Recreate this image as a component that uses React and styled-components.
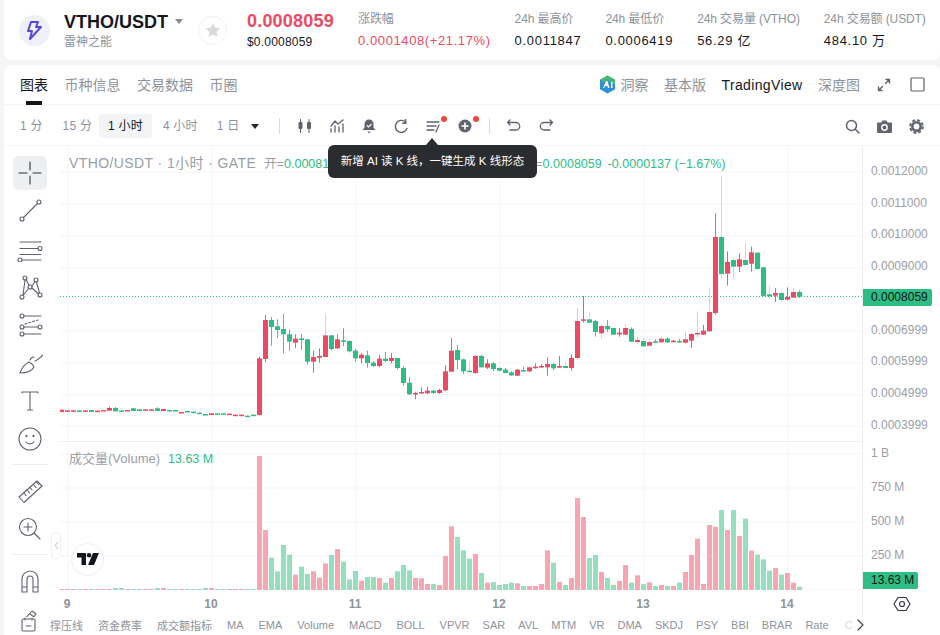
import React from "react"
import styled, { createGlobalStyle } from "styled-components"

const RED = "#ec4a62"
const GREEN = "#2dbd85"
const GREY = "#8d929b"
const INK = "#14171c"
const ICON = "#5f626e"

const GlobalStyle = createGlobalStyle`
  html, body {
    margin: 0;
    padding: 0;
    background: #f4f5f6;
  }
  body {
    font-family: "Liberation Sans", "Noto Sans CJK SC", sans-serif;
  }
`

// rows are [colour, body top, body bottom, wick top, wick bottom, pale wick], read off at 3x
const section = (base, rows) =>
  rows.map(([c, bt, bb, wt = bt, wb = bb, pale]) => ({
    red: c === "r",
    top: base + bt / 3,
    bottom: base + bb / 3,
    wickTop: base + wt / 3,
    wickBottom: base + wb / 3,
    pale,
  }))

const flat = [
  ["r", 809, 816, 809, 816, 0], ["r", 811, 815], ["r", 811, 815], ["g", 811, 813], ["r", 811, 815], ["g", 810, 816],
  ["r", 812, 815], ["r", 810, 813], ["r", 804, 812, 800, 812], ["g", 804, 814, 801, 814], ["g", 811, 815], ["r", 810, 812],
  ["g", 805, 813], ["g", 808, 813], ["r", 808, 810], ["r", 808, 810], ["g", 805, 813, 802, 813], ["r", 807, 813],
  ["g", 810, 812], ["g", 810, 812], ["r", 816, 818], ["g", 813, 815], ["g", 815, 817], ["g", 818, 820],
  ["g", 822, 825], ["r", 820, 825], ["g", 820, 822], ["g", 820, 822], ["r", 821, 823], ["r", 824, 826],
  ["r", 824, 826], ["g", 827, 829], ["g", 824, 826],
]

const candles = [
  ...section(140, flat),
  ...section(140, [["r", 655, 825, 650, 826], ["r", 540, 657, 525, 666]]),
  ...section(280, [
    ["g", 120, 141, 111, 197], ["g", 139, 150, 118, 173], ["g", 147, 163, 101, 221], ["g", 163, 185, 148, 212],
    ["r", 176, 188, 163, 204], ["g", 175, 180, 163, 209], ["g", 178, 245, 178, 254], ["r", 231, 245, 212, 278],
    ["r", 228, 233, 205, 248], ["r", 166, 231, 103, 231, 1], ["g", 166, 207, 166, 211], ["r", 178, 205, 163, 207],
    ["g", 181, 185, 144, 199], ["g", 183, 214, 181, 217], ["g", 212, 235, 207, 245], ["r", 224, 235, 219, 250],
    ["g", 226, 249, 212, 263], ["g", 248, 258, 243, 261], ["r", 236, 258, 224, 261], ["g", 236, 243, 216, 246],
    ["r", 234, 243, 219, 250], ["g", 234, 264, 234, 268], ["g", 264, 309, 259, 317], ["g", 308, 343, 292, 345],
    ["r", 339, 343, 335, 358], ["r", 336, 339, 322, 341], ["r", 332, 340, 320, 342], ["g", 332, 339, 330, 341],
    ["r", 330, 339, 327, 342], ["r", 274, 331, 255, 334],
    ["r", 212, 275, 174, 275], ["g", 210, 240, 195, 268], ["g", 238, 274, 236, 282], ["g", 272, 275, 246, 276, 1],
    ["r", 228, 279, 226, 281], ["g", 228, 262, 224, 263], ["r", 250, 263, 238, 267], ["g", 250, 267, 246, 273],
    ["g", 264, 272, 262, 274], ["g", 269, 279, 264, 280], ["g", 277, 286, 274, 288], ["r", 269, 287, 267, 288],
    ["g", 270, 272, 260, 274], ["r", 262, 274, 260, 276], ["r", 260, 264, 250, 266], ["r", 258, 261, 252, 264],
    ["r", 252, 262, 232, 287], ["g", 252, 265, 248, 270], ["r", 258, 263, 228, 264], ["g", 258, 264, 246, 266, 1],
    ["r", 234, 264, 223, 272], ["r", 123, 234, 84, 240, 1], ["r", 118, 122, 48, 128], ["g", 118, 128, 96, 130, 1],
    ["g", 123, 156, 120, 170], ["r", 138, 160, 132, 176, 1], ["g", 138, 148, 120, 155], ["g", 144, 164, 144, 165],
    ["r", 158, 163, 144, 170], ["r", 144, 164, 132, 166, 1], ["g", 147, 185, 142, 186], ["r", 180, 186, 170, 194, 1],
  ]),
  ...section(170, [
    ["g", 513, 529, 505, 531, 1], ["r", 516, 527, 508, 528, 1], ["g", 514, 517, 508, 518], ["r", 506, 517, 499, 519, 1],
    ["g", 506, 517, 502, 519], ["r", 512, 515, 510, 516], ["g", 513, 516, 507, 519], ["r", 508, 518, 484, 520, 1],
    ["r", 492, 512, 490, 534], ["r", 489, 491, 424, 503, 1], ["r", 482, 494, 465, 495], ["r", 426, 484, 352, 486, 1],
    ["r", 201, 429, 130, 434], ["g", 201, 312, 18, 326, 1], ["r", 276, 311, 244, 347], ["g", 270, 290, 266, 327, 1],
    ["r", 268, 290, 250, 306], ["g", 270, 285, 218, 285, 1], ["r", 247, 281, 230, 305], ["g", 248, 297, 248, 298],
    ["g", 292, 378, 290, 379], ["g", 373, 379, 348, 386, 1], ["r", 369, 377, 354, 396], ["g", 369, 390, 364, 398, 1],
    ["r", 381, 389, 352, 391], ["r", 366, 383, 354, 384, 1], ["g", 366, 380, 361, 384],
  ]),
]

const volumeTops = [
  ...Array.from({ length: 33 }, (_, i) => ([9, 10, 16, 17, 24, 25].includes(i) ? 444 : 447)),
  48, 270, 353, 394, 315, 344, 404, 380, 402, 394, 413,
  370, 345, 327, 365, 418, 393, 422, 411, 411, 414, 428, 414, 394, 375, 391, 414, 415, 432, 432, 435,
  348, 259, 291, 331, 356, 342, 399, 428, 426, 435, 432, 428, 430, 438, 438, 438, 432, 331, 368, 426,
  435, 414, 174, 231, 354, 345, 396, 414, 435, 423, 375, 428, 406,
  432, 427, 438, 435, 438, 438, 428, 396, 345, 296, 432, 255, 260, 210, 270, 210, 288, 236, 332, 344,
  358, 392, 384, 404, 399, 428, 440,
]

const indicators = ["撑压线", "资金费率", "成交额指标", "MA", "EMA", "Volume", "MACD", "BOLL", "VPVR", "SAR", "AVL", "MTM", "VR", "DMA", "SKDJ", "PSY", "BBI", "BRAR", "Rate"]

const priceGrid = [171.5, 203.5, 235.5, 267.5, 330.5, 362.5, 394.5, 425.5]
const volumeGrid = [453.5, 487.5, 521.5, 555.5]
const dayGrid = [67.5, 211.5, 355.5, 499.5, 643.5, 787.5]
const candleX = i => 61.5 + 6 * i

const Page = styled.div`
  width: 940px;
  height: 635px;
  overflow: hidden;
  display: flex;
  flex-direction: column;
  gap: 5px;
  padding-left: 4px;
  box-sizing: border-box;
`

const Header = styled.header`
  height: 60px;
  flex: none;
  display: flex;
  align-items: center;
  background: #fff;
  border-radius: 0 0 6px 6px;
  padding-left: 15px;
`

const CoinLogo = styled.div`
  width: 31px;
  height: 31px;
  border-radius: 50%;
  background: #eef0fa;
  display: flex;
  align-items: center;
  justify-content: center;
  margin-right: 14px;
`

const CoinName = styled.div`
  width: 134px;
  display: flex;
  flex-direction: column;
  gap: 3px;
`

const Pair = styled.div`
  display: flex;
  align-items: center;
  gap: 7px;
  font-size: 18px;
  line-height: 20px;
  font-weight: 700;
  color: ${INK};
`

const Caret = styled.span`
  width: 0;
  height: 0;
  border-left: ${p => p.$size}px solid transparent;
  border-right: ${p => p.$size}px solid transparent;
  border-top: ${p => p.$size + 1}px solid ${p => p.$color};
`

const CoinSub = styled.div`
  font-size: 12px;
  line-height: 14px;
  color: ${GREY};
`

const StarButton = styled.div`
  width: 27px;
  height: 27px;
  border: 1px solid #f0f1f3;
  border-radius: 50%;
  display: flex;
  align-items: center;
  justify-content: center;
  margin-right: 20px;
`

const LastPrice = styled.div`
  width: 111px;
  display: flex;
  flex-direction: column;
  gap: 4px;
`

const BigPrice = styled.div`
  font-size: 18px;
  line-height: 20px;
  font-weight: 700;
  color: ${RED};
  letter-spacing: 0.2px;
`

const UsdPrice = styled.div`
  font-size: 12px;
  line-height: 14px;
  letter-spacing: 0.2px;
  color: ${INK};
`

const Stats = styled.div`
  display: flex;
  gap: 24px;
`

const Stat = styled.div`
  display: flex;
  flex-direction: column;
  gap: 5px;
`

const StatLabel = styled.div`
  font-size: 12px;
  line-height: 15px;
  letter-spacing: -0.1px;
  color: ${GREY};
  white-space: nowrap;
`

const StatValue = styled.div`
  font-size: 13px;
  line-height: 17px;
  letter-spacing: ${p => (p.$red ? 0.6 : 0.7)}px;
  white-space: nowrap;
  color: ${p => (p.$red ? RED : INK)};
`

const Card = styled.section`
  flex: 1;
  min-height: 0;
  display: flex;
  flex-direction: column;
  background: #fff;
  border-radius: 8px 8px 0 0;
`

const TabBar = styled.div`
  height: 40px;
  flex: none;
  display: flex;
  align-items: center;
  justify-content: space-between;
  padding: 0 7px 0 16px;
  border-bottom: 1px solid #f2f3f5;
  box-sizing: border-box;
`

const TabGroup = styled.div`
  display: flex;
  align-items: center;
  gap: ${p => p.$gap}px;
`

const WindowButtons = styled.div`
  display: flex;
  align-items: center;
  gap: 1px;
  margin-left: -7.5px;
`

const Tab = styled.div`
  position: relative;
  font-size: 14px;
  line-height: 40px;
  white-space: nowrap;
  letter-spacing: ${p => (p.$latin ? 0.35 : 0)}px;
  color: ${p => (p.$active ? INK : GREY)};

  ${p => p.$marked && `
    &::after {
      content: "";
      position: absolute;
      left: 6px;
      right: 6px;
      bottom: 0;
      height: 4px;
      background: ${INK};
    }
  `}
`

const Insight = styled.div`
  display: flex;
  align-items: center;
  gap: 5px;
`

const ToolBar = styled.div`
  height: 40px;
  flex: none;
  display: flex;
  align-items: center;
  justify-content: space-between;
  padding: 2px 8px 0 16px;
  box-sizing: border-box;
`

const ToolGroup = styled.div`
  display: flex;
  align-items: center;
`

const Interval = styled.div`
  height: 24px;
  line-height: 24px;
  padding: 0 ${p => (p.$active ? 9 : 0)}px;
  margin-right: ${p => p.$after}px;
  border-radius: 4px;
  font-size: 12px;
  letter-spacing: 0.2px;
  white-space: nowrap;
  background: ${p => (p.$active ? "#f3f4f6" : "transparent")};
  color: ${p => (p.$active ? INK : GREY)};
`

const Divider = styled.span`
  width: 1px;
  height: 16px;
  background: #d8dadd;
  margin: 0 ${p => p.$right}px 0 ${p => p.$left}px;
`

const IconSlot = styled.div`
  position: relative;
  width: 32px;
  height: 24px;
  display: flex;
  align-items: center;
  justify-content: center;
`

const RedDot = styled.span`
  position: absolute;
  top: 2px;
  right: 2px;
  width: 6px;
  height: 6px;
  border-radius: 50%;
  background: #f0483e;
`

const Tooltip = styled.div`
  position: absolute;
  top: 145px;
  left: 328px;
  width: 209px;
  height: 33px;
  box-sizing: border-box;
  border-radius: 6px;
  background: #2a2c30;
  color: #fff;
  font-size: 11.5px;
  line-height: 32px;
  text-align: center;
  white-space: nowrap;
  z-index: 3;

  &::before {
    content: "";
    position: absolute;
    top: -7px;
    left: 98px;
    border-left: 6px solid transparent;
    border-right: 6px solid transparent;
    border-bottom: 7px solid #2a2c30;
  }
`

const Workspace = styled.div`
  flex: 1;
  min-height: 0;
  display: flex;
  border-top: 1px solid #f7f7f8;
`

const Rail = styled.div`
  width: 56px;
  flex: none;
  display: flex;
  flex-direction: column;
  align-items: center;
  padding: 10px 4px 0 0;
  box-sizing: border-box;
  overflow: hidden;
`

const RailTool = styled.div`
  width: 34px;
  height: 34px;
  flex: none;
  margin-bottom: 4px;
  border-radius: 6px;
  display: flex;
  align-items: center;
  justify-content: center;
  background: ${p => (p.$active ? "#eeeff1" : "transparent")};
`

const RailRule = styled.span`
  width: 36px;
  height: 1px;
  flex: none;
  background: #eceef0;
  margin: 4px 0 9px;
`

const ChartColumn = styled.div`
  position: relative;
  width: 802px;
  flex: none;
  display: flex;
  flex-direction: column;
`

const ChartSvg = styled.svg`
  display: block;
  width: 802px;
  height: 444px;
  flex: none;
`

const Legend = styled.div`
  position: absolute;
  top: ${p => p.$top}px;
  left: 9px;
  display: flex;
  align-items: baseline;
  white-space: nowrap;
  font-size: 12.5px;
  line-height: 18px;
  color: #9a9ea6;
`

const LegendTitle = styled.span`
  font-size: 14px;
  letter-spacing: 0.4px;
  margin-right: 8px;
`

const LegendKey = styled.span`
  margin-left: 7.3px;
`

const LegendGreen = styled.span`
  color: ${GREEN};
  margin-left: ${p => p.$left || 0}px;
`

const VolumeTitle = styled.span`
  font-size: 13px;
  margin-right: 8px;
`

const LogoBadge = styled.div`
  position: absolute;
  left: 11px;
  top: 397px;
  width: 33px;
  height: 33px;
  box-sizing: border-box;
  border: 1px solid #efeff1;
  border-radius: 50%;
  background: #fff;
  display: flex;
  align-items: center;
  justify-content: center;
`

const Collapse = styled.div`
  position: absolute;
  left: -9px;
  top: 386px;
  width: 8px;
  height: 25px;
  border: 1px solid #eef0f2;
  border-radius: 4px;
  background: #fff;
  display: flex;
  align-items: center;
  justify-content: center;
`

const TimeAxis = styled.div`
  display: flex;
  margin-left: -65px;
  height: 27px;
  align-items: center;
`

const Tick = styled.span`
  width: 144px;
  flex: none;
  text-align: center;
  font-size: 12px;
  font-weight: 700;
  color: #8d929b;
`

const AxisColumn = styled.div`
  flex: 1;
  display: flex;
  flex-direction: column;
  border-left: 1px solid #eceef2;
`

const PricePane = styled.div`
  height: 295px;
  flex: none;
  box-sizing: border-box;
  padding-top: 9px;
  display: grid;
  grid-auto-rows: 31.75px;
  align-items: center;
`

const VolumePane = styled.div`
  height: 149px;
  flex: none;
  margin-top: -5px;
  display: grid;
  grid-template-rows: repeat(4, 34px) 17px;
  align-items: center;
`

const AxisLabel = styled.span`
  font-size: 12px;
  line-height: 16px;
  color: #9a9ea6;
  padding-left: 8px;
`

const AxisTag = styled.span`
  justify-self: start;
  height: ${p => p.$h}px;
  line-height: ${p => p.$h}px;
  width: ${p => p.$w}px;
  box-sizing: border-box;
  padding-left: 8px;
  border-radius: 0 2px 2px 0;
  background: ${GREEN};
  color: #0c1512;
  font-size: 12px;
`

const AxisFoot = styled.div`
  display: flex;
  align-items: center;
  justify-content: center;
  height: 27px;
  margin-top: 5px;
`

const BottomStrip = styled.div`
  height: 18px;
  flex: none;
  display: flex;
  align-items: center;
  background: #fff;
  padding: 0 0 3px 17px;
  box-sizing: border-box;
  position: relative;
`

const Indicators = styled.div`
  display: flex;
  align-items: center;
  margin-left: 14px;
  font-size: 11px;
  color: ${GREY};
  white-space: nowrap;
`

const Indicator = styled.span`
  margin-right: ${p => (p.$tight ? 13 : 15)}px;
`

const Faded = styled.span`
  color: #d7d9dc;
  margin-left: 3px;
`

const Stroke = ({ size = 20, box = 20, children, color = ICON, width = 1.1 }) => (
  <svg width={size} height={size} viewBox={`0 0 ${box} ${box}`} fill="none" stroke={color} strokeWidth={width} strokeLinecap="round" strokeLinejoin="round">
    {children}
  </svg>
)

const railTools = [
  <Stroke key="cross" size={26} box={26} color="#33353b">
    <path d="M13 2v8M13 16v8M2 13h8M16 13h8" />
  </Stroke>,
  <Stroke key="line" size={26} box={26}>
    <circle cx="5" cy="21" r="2" /><circle cx="22" cy="4" r="2" /><path d="M6.5 19.5 20.5 5.5" />
  </Stroke>,
  <Stroke key="channel" size={26} box={26}>
    <path d="M3 6h21M3 12.5h18M3 18.5h21M5 24h19" /><circle cx="23" cy="12.5" r="2" /><circle cx="3" cy="24" r="2" />
  </Stroke>,
  <Stroke key="pattern" size={26} box={26}>
    <circle cx="8" cy="4" r="2" /><circle cx="19" cy="6" r="2" /><circle cx="13" cy="13" r="2" /><circle cx="5" cy="23" r="2" /><circle cx="23" cy="21" r="2" />
    <path d="M8 6 6 21M9 5l3 6.5M15 12l3-4.5M11.5 14.5 6 21.5M15 14l6.5 6M19.5 8l3 11" />
  </Stroke>,
  <Stroke key="fib" size={26} box={26}>
    <circle cx="5" cy="4" r="2" /><circle cx="5" cy="15" r="2" /><circle cx="5" cy="22" r="2" /><circle cx="23" cy="15" r="2" />
    <path d="M7 4h17M7 15h14M7 22h17" /><path d="M8 12l13-4" strokeDasharray="2 2" />
  </Stroke>,
  <Stroke key="brush" size={26} box={26}>
    <path d="M3 23c2-6 5-9 9-11 3 1 4 3 5 5-2 4-6 6-14 6Z" /><path d="M13 10c1-2 3-3 4-3M18 11c3-1 6-4 8-6" />
  </Stroke>,
  <Stroke key="text" size={26} box={26}>
    <path d="M5 5V4h16v1M13 4v18M10.5 22h5" />
  </Stroke>,
  <Stroke key="smile" size={26} box={26}>
    <circle cx="13" cy="13" r="11" /><circle cx="9.5" cy="10" r=".6" /><circle cx="16.5" cy="10" r=".6" /><path d="M9 16c2 2.5 6 2.5 8 0" />
  </Stroke>,
]

const measureTools = [
  <Stroke key="ruler" size={26} box={26}>
    <path d="M2 19 20 3l5 5L7 24.5Z" /><path d="M7 15l2 2.5M10 12l2.5 3M13 9.5l2 2.5M16.5 6.5l2.5 3M19.5 4l2 2.5" />
  </Stroke>,
  <Stroke key="zoom" size={26} box={26}>
    <circle cx="11" cy="11" r="8.5" /><path d="M17 17l6 6M11 7v8M7 11h8" />
  </Stroke>,
]

const Candle = ({ c, i }) => {
  const color = c.red ? RED : GREEN
  const x = candleX(i)
  const height = Math.max(c.bottom - c.top, 1.5)
  return (
    <g fill={color}>
      <rect x={x - 0.5} y={c.wickTop} width="1" height={Math.max(c.wickBottom - c.wickTop, 0)} opacity={c.pale ? 0.35 : 0.9} />
      <rect x={x - 2.5} y={c.top} width="5" height={height} />
    </g>
  )
}

const Chart = () => (
  <ChartSvg viewBox="60 146 802 444">
    <g fill="#f4f5f7">
      {dayGrid.map(x => <rect key={x} x={x} y="146" width="1" height="444" />)}
      {[...priceGrid, ...volumeGrid].map(y => <rect key={y} x="60" y={y} width="802" height="1" />)}
    </g>
    <rect x="60" y="441" width="802" height="1" fill="#eceef0" />
    <rect x="60" y="589.5" width="802" height="1" fill="#f1f2f4" />
    <path d="M60 296.5H862" stroke={GREEN} strokeDasharray="1 2" strokeWidth="1" />
    {volumeTops.map((top, i) => {
      const y = 440 + top / 3
      return (
        <rect
          key={i}
          x={candleX(i) - 2.5}
          y={y}
          width="5"
          height={590 - y}
          fill={candles[i] && candles[i].red ? "#f9a4b1" : "#94dfbe"}
        />
      )
    })}
    {candles.map((c, i) => <Candle key={i} c={c} i={i} />)}
  </ChartSvg>
)

const App = () => (
  <Page>
    <GlobalStyle />
    <Header>
      <CoinLogo>
        <svg width="15" height="21" viewBox="0 0 15 21" fill="none" stroke="#5b45d8" strokeWidth="2" strokeLinejoin="round">
          <path d="M4 2h7L9 7h5L3 19l2-8H1Z" />
        </svg>
      </CoinLogo>
      <CoinName>
        <Pair>VTHO/USDT <Caret $size={4} $color="#888c94" /></Pair>
        <CoinSub>雷神之能</CoinSub>
      </CoinName>
      <StarButton>
        <svg width="16" height="16" viewBox="0 0 24 24" fill="#d9dadd">
          <path d="M12 1.5 15.3 8.6 23 9.5l-5.7 5.2L18.8 22.5 12 18.6 5.2 22.5l1.5-7.8L1 9.5l7.7-.9Z" />
        </svg>
      </StarButton>
      <LastPrice>
        <BigPrice>0.0008059</BigPrice>
        <UsdPrice>$0.0008059</UsdPrice>
      </LastPrice>
      <Stats>
        <Stat><StatLabel>涨跌幅</StatLabel><StatValue $red>0.0001408(+21.17%)</StatValue></Stat>
        <Stat><StatLabel>24h 最高价</StatLabel><StatValue>0.0011847</StatValue></Stat>
        <Stat><StatLabel>24h 最低价</StatLabel><StatValue>0.0006419</StatValue></Stat>
        <Stat><StatLabel>24h 交易量 (VTHO)</StatLabel><StatValue>56.29 亿</StatValue></Stat>
        <Stat><StatLabel>24h 交易额 (USDT)</StatLabel><StatValue>484.10 万</StatValue></Stat>
      </Stats>
    </Header>

    <Card>
      <TabBar>
        <TabGroup $gap={16.5}>
          <Tab $active $marked>图表</Tab>
          <Tab>币种信息</Tab>
          <Tab>交易数据</Tab>
          <Tab>币圈</Tab>
        </TabGroup>
        <TabGroup $gap={15.5}>
          <Insight>
            <svg width="17" height="19" viewBox="0 0 17 19">
              <path d="M8.5.5 16 4.8v9.4l-7.5 4.3L1 14.2V4.8Z" fill="#2f8fd8" />
              <path d="M8.5.5 16 4.8v5L8.5 5 3 8V4Z" fill="#49b86f" />
              <path d="M4 13 7 6h1.5l2 7H9l-.5-2H6l-.8 2ZM12 7h1.5v6H12Z" fill="#fff" />
            </svg>
            <Tab>洞察</Tab>
          </Insight>
          <Tab>基本版</Tab>
          <Tab $active $latin>TradingView</Tab>
          <Tab>深度图</Tab>
          <WindowButtons>
            <IconSlot>
              <Stroke size={14} box={14} color="#5f626e" width={1.4}>
                <path d="M8.5 5.5 12.5 1.5M9 1.5h3.5V5M5.5 8.5l-4 4M1.5 9v3.5H5" />
              </Stroke>
            </IconSlot>
            <IconSlot>
              <Stroke size={15} box={15} color="#5f626e" width={1.2}>
                <rect x="1" y="1" width="13" height="13" rx="1" />
              </Stroke>
            </IconSlot>
          </WindowButtons>
        </TabGroup>
      </TabBar>

      <ToolBar>
        <ToolGroup>
          <Interval $after={20}>1 分</Interval>
          <Interval $after={7}>15 分</Interval>
          <Interval $active $after={11}>1 小时</Interval>
          <Interval $after={19}>4 小时</Interval>
          <Interval $after={11.5}>1 日</Interval>
          <Caret $size={4.5} $color="#24262b" />
          <Divider $left={20.5} $right={9} />
          <IconSlot>
            <svg width="16" height="14" viewBox="0 0 16 14" fill="#5f626e">
              <rect x="1.5" y="3" width="4" height="7" rx="1" /><rect x="3" y="0" width="1" height="14" />
              <rect x="10" y="3" width="4" height="7" rx="1" /><rect x="11.5" y="0" width="1" height="14" />
            </svg>
          </IconSlot>
          <IconSlot>
            <Stroke size={16} box={16} width={1.3}>
              <path d="M2 8 6 3l3 3 5-4M2 14v-3M6 14V8M10 14v-5M14 14V6" />
            </Stroke>
          </IconSlot>
          <IconSlot>
            <svg width="14" height="15" viewBox="0 0 14 15">
              <path d="M7 .5c3 0 4.5 2 4.5 5v3l2 2.500H.5l2-2.500v-3c0-3 1.500-5 4.500-5Z" fill="#5f626e" />
              <path d="M5.5 12.500h3L7 14.500Z" fill="#5f626e" />
              <path d="M4.8 6.300 6.500 8l3-3" stroke="#fff" strokeWidth="1.2" fill="none" />
            </svg>
          </IconSlot>
          <IconSlot>
            <Stroke size={15} box={15} width={1.4}>
              <path d="M13 9.500A6 6 0 1 1 11.500 3" /><path d="M10 .5 12.500 3.500 9.500 5" transform="rotate(30 11 3)" />
            </Stroke>
          </IconSlot>
          <IconSlot>
            <Stroke size={15} box={15} width={1.3}>
              <path d="M1 3h12M1 7h9M1 11h7M13 6l-3 7" />
            </Stroke>
            <RedDot />
          </IconSlot>
          <IconSlot>
            <svg width="14" height="14" viewBox="0 0 14 14">
              <circle cx="7" cy="7" r="6.5" fill="#62656f" />
              <path d="M7 3.5v7M3.5 7h7" stroke="#fff" strokeWidth="1.6" />
            </svg>
            <RedDot />
          </IconSlot>
          <Divider $left={8} $right={8} />
          <IconSlot>
            <Stroke size={16} box={16} width={1.3}>
              <path d="M4 2 1.5 4.5 4 7M1.5 4.5H10a3.500 3.500 0 0 1 0 7.500H4" />
            </Stroke>
          </IconSlot>
          <IconSlot>
            <Stroke size={16} box={16} width={1.3}>
              <path d="M12 2l2.500 2.500L12 7M14.500 4.500H6a3.500 3.500 0 0 0 0 7.500H12" />
            </Stroke>
          </IconSlot>
        </ToolGroup>
        <ToolGroup>
          <IconSlot>
            <Stroke size={15} box={15} width={1.5}>
              <circle cx="6.5" cy="6.5" r="5" /><path d="M10.5 10.5 14 14" />
            </Stroke>
          </IconSlot>
          <IconSlot>
            <svg width="15" height="13" viewBox="0 0 15 13">
              <path d="M1 2.500h3.500L5.500.5h4l1 2H14a1 1 0 0 1 1 1V12a1 1 0 0 1-1 1H1a1 1 0 0 1-1-1V3.500a1 1 0 0 1 1-1Z" fill="#62656f" />
              <circle cx="7.5" cy="7.5" r="2.7" fill="none" stroke="#fff" strokeWidth="1.4" />
            </svg>
          </IconSlot>
          <IconSlot>
            <svg width="15" height="15" viewBox="0 0 15 15">
              <circle cx="7.5" cy="7.5" r="6.4" fill="none" stroke="#62656f" strokeWidth="1.8" strokeDasharray="3 2" />
              <circle cx="7.5" cy="7.5" r="4.2" fill="none" stroke="#62656f" strokeWidth="2.6" />
            </svg>
          </IconSlot>
        </ToolGroup>
      </ToolBar>

      <Tooltip>新增 AI 读 K 线，一键生成 K 线形态</Tooltip>

      <Workspace>
        <Rail>
          {railTools.map((tool, i) => <RailTool key={i} $active={i === 0}>{tool}</RailTool>)}
          <RailRule />
          {measureTools.map((tool, i) => <RailTool key={i}>{tool}</RailTool>)}
          <RailRule />
          <RailTool>
            <Stroke size={26} box={26}>
              <path d="M5 24V11a8 8 0 0 1 16 0v13h-5V11a3 3 0 0 0-6 0v13ZM5 19h5M16 19h5" />
            </Stroke>
          </RailTool>
          <RailTool>
            <Stroke size={26} box={26}>
              <path d="M3 18 15 5l4 3L8 22M13 8l4 3" />
            </Stroke>
          </RailTool>
        </Rail>

        <ChartColumn>
          <Chart />
          <Legend $top={8}>
            <LegendTitle>VTHO/USDT · 1小时 · GATE</LegendTitle>
            开=<LegendGreen>0.0008196</LegendGreen>
            <LegendKey>高=</LegendKey><LegendGreen>0.0008196</LegendGreen>
            <LegendKey>低=</LegendKey><LegendGreen>0.0008059</LegendGreen>
            <LegendKey>收=</LegendKey><LegendGreen>0.0008059</LegendGreen>
            <LegendGreen $left={6}>-0.0000137 (−1.67%)</LegendGreen>
          </Legend>
          <Legend $top={304}>
            <VolumeTitle>成交量(Volume)</VolumeTitle>
            <LegendGreen>13.63 M</LegendGreen>
          </Legend>
          <LogoBadge>
            <svg width="22" height="13" viewBox="0 0 22 13" fill="#131722">
              <path d="M0 0h9v12H4.500V4.500H0Z" />
              <circle cx="12" cy="2.3" r="2.3" />
              <path d="M16 0h6l-5 12h-6Z" />
            </svg>
          </LogoBadge>
          <Collapse>
            <svg width="5" height="9" viewBox="0 0 5 9" fill="none" stroke="#b8bbc0" strokeWidth="1">
              <path d="M4 1 1 4.500 4 8" />
            </svg>
          </Collapse>
          <TimeAxis>
            <Tick>9</Tick>
            <Tick>10</Tick>
            <Tick>11</Tick>
            <Tick>12</Tick>
            <Tick>13</Tick>
            <Tick>14</Tick>
          </TimeAxis>
        </ChartColumn>

        <AxisColumn>
          <PricePane>
            <AxisLabel>0.0012000</AxisLabel>
            <AxisLabel>0.0011000</AxisLabel>
            <AxisLabel>0.0010000</AxisLabel>
            <AxisLabel>0.0009000</AxisLabel>
            <AxisTag $h={17} $w={69}>0.0008059</AxisTag>
            <AxisLabel>0.0006999</AxisLabel>
            <AxisLabel>0.0005999</AxisLabel>
            <AxisLabel>0.0004999</AxisLabel>
            <AxisLabel>0.0003999</AxisLabel>
          </PricePane>
          <VolumePane>
            <AxisLabel>1 B</AxisLabel>
            <AxisLabel>750 M</AxisLabel>
            <AxisLabel>500 M</AxisLabel>
            <AxisLabel>250 M</AxisLabel>
            <AxisTag $h={17} $w={55}>13.63 M</AxisTag>
          </VolumePane>
          <AxisFoot>
            <Stroke size={18} box={18} color="#33353b" width={1.2}>
              <path d="M5 2.500h8L17 9l-4 6.500H5L1 9Z" /><circle cx="9" cy="9" r="2.5" />
            </Stroke>
          </AxisFoot>
        </AxisColumn>
      </Workspace>

      <BottomStrip>
        <Stroke size={15} box={15} width={1.1}>
          <rect x="1" y="2" width="13" height="12" rx="1.5" /><path d="M4 1v2M11 1v2M5 9h5" />
        </Stroke>
        <Indicators>
          {indicators.map((name, i) => <Indicator key={name} $tight={i >= 8}>{name}</Indicator>)}
          <Faded>C</Faded>
          <Stroke size={14} box={14} color="#44464d" width={1.2}><path d="M5 2l5 5-5 5" /></Stroke>
        </Indicators>
      </BottomStrip>
    </Card>
  </Page>
)

export default App
